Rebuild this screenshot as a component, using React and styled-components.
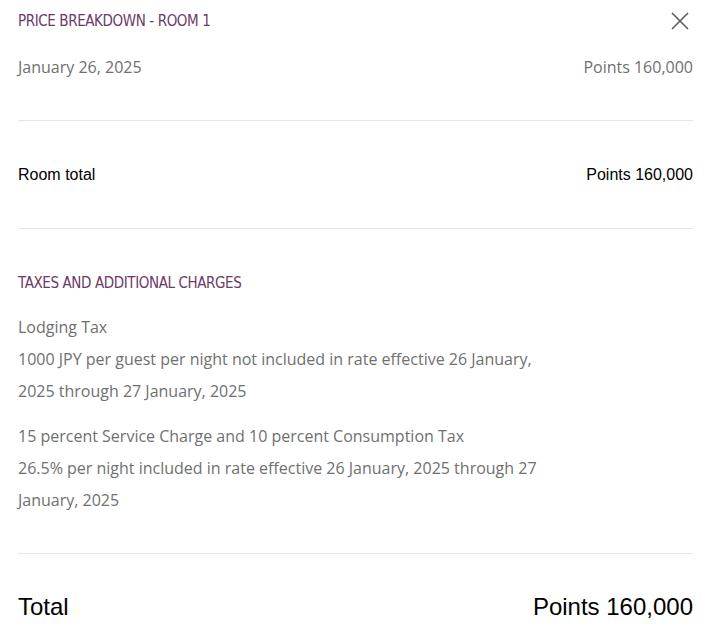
import styled, { createGlobalStyle } from "styled-components";

const GlobalStyle = createGlobalStyle`
  body {
    margin: 0;
    background: #ffffff;
  }
`;

const Panel = styled.div`
  padding: 0 15px 0 18px;
  font-family: "Open Sans", "Liberation Sans", sans-serif;
`;

const Header = styled.div`
  height: 42px;
  display: flex;
  align-items: center;
  justify-content: space-between;
`;

const Eyebrow = styled.h2`
  margin: 0;
  font-family: "DejaVu Sans Condensed", "Liberation Sans", sans-serif;
  font-size: 15px;
  font-weight: 400;
  line-height: 20px;
  letter-spacing: -0.4px;
  color: #6c3a68;
  text-transform: uppercase;
`;

const CloseButton = styled.button`
  border: 0;
  background: none;
  padding: 0;
  margin-right: 4px;
  width: 18px;
  height: 18px;
  display: flex;
  cursor: pointer;
`;

const Section = styled.div`
  padding: ${(p) => p.$pad || "0"};
  border-bottom: ${(p) => (p.$last ? "none" : "1px solid #e5e5e5")};
`;

const Row = styled.div`
  display: flex;
  justify-content: space-between;
  align-items: center;
  line-height: ${(p) => (p.$big ? "30px" : "22px")};
  font-family: ${(p) =>
    p.$strong ? '"Liberation Sans", Arial, sans-serif' : '"Open Sans", sans-serif'};
  font-size: ${(p) => (p.$big ? "24px" : "16px")};
  color: ${(p) => (p.$strong ? "#000000" : "#707070")};
`;

const ChargeBlock = styled.div`
  margin-top: ${(p) => p.$top || "0"};
  max-width: 545px;
  font-size: 16px;
  line-height: 32px;
  color: #707070;
`;

const CloseIcon = () => (
  <svg width="18" height="18" viewBox="0 0 18 18">
    <path d="M1 1L17 17M17 1L1 17" stroke="#555" strokeWidth="1.5" fill="none" />
  </svg>
);

export default function App() {
  return (
    <>
      <GlobalStyle />
      <Panel>
        <Header>
          <Eyebrow>Price Breakdown - Room 1</Eyebrow>
          <CloseButton aria-label="Close">
            <CloseIcon />
          </CloseButton>
        </Header>

        <Section $pad="14px 0 42px">
          <Row>
            <span>January 26, 2025</span>
            <span>Points 160,000</span>
          </Row>
        </Section>

        <Section $pad="43px 0 42px">
          <Row $strong>
            <span>Room total</span>
            <span>Points 160,000</span>
          </Row>
        </Section>

        <Section $pad="44px 0 37px">
          <Eyebrow>Taxes and Additional Charges</Eyebrow>
          <ChargeBlock $top="18px">
            Lodging Tax
            <br />
            1000 JPY per guest per night not included in rate effective 26 January, 2025 through 27 January, 2025
          </ChargeBlock>
          <ChargeBlock $top="13px">
            15 percent Service Charge and 10 percent Consumption Tax
            <br />
            26.5% per night included in rate effective 26 January, 2025 through 27 January, 2025
          </ChargeBlock>
        </Section>

        <Section $pad="38px 0 0" $last>
          <Row $strong $big>
            <span>Total</span>
            <span>Points 160,000</span>
          </Row>
        </Section>
      </Panel>
    </>
  );
}
